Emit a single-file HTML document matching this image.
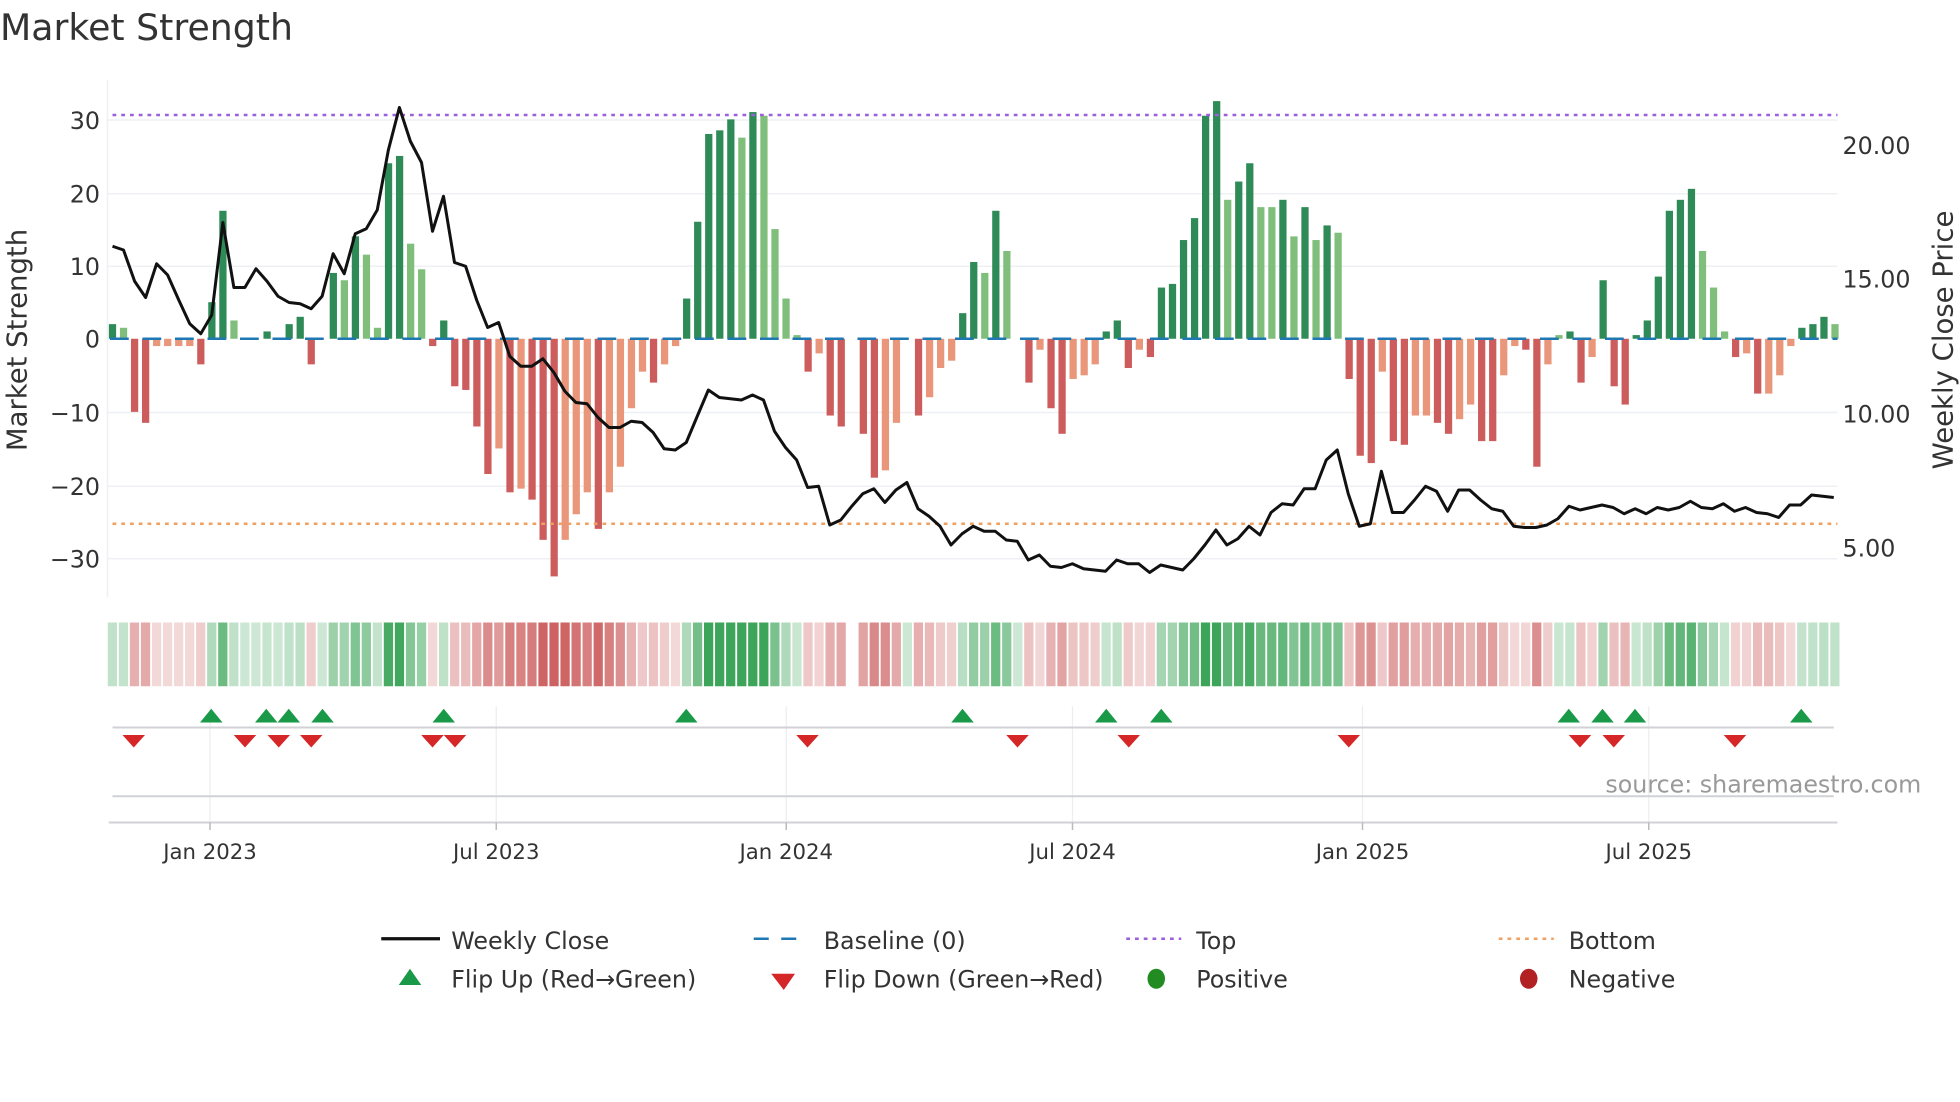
<!DOCTYPE html>
<html><head><meta charset="utf-8">
<style>
html,body{margin:0;padding:0;background:#fff;}
svg{display:block;font-family:"DejaVu Sans","Liberation Sans",sans-serif;}
</style></head>
<body>
<svg id="s" width="1960" height="1102" viewBox="0 0 1568 881.6" xmlns="http://www.w3.org/2000/svg">
<rect width="1568" height="882" fill="#fff"/>
<text x="0" y="32" font-size="29" fill="#333">Market Strength</text>
<g stroke="#eef0f4" stroke-width="1.2">
<line x1="86" x2="1470" y1="96" y2="96"/><line x1="86" x2="1470" y1="155" y2="155"/>
<line x1="86" x2="1470" y1="213" y2="213"/><line x1="86" x2="1470" y1="330" y2="330"/>
<line x1="86" x2="1470" y1="389" y2="389"/><line x1="86" x2="1470" y1="447" y2="447"/>
<line x1="86" x2="86" y1="64" y2="478"/>
</g>
<g font-size="19" fill="#333" text-anchor="end">
<text x="80" y="103">30</text><text x="80" y="162">20</text><text x="80" y="220">10</text>
<text x="80" y="278">0</text><text x="80" y="337">−10</text><text x="80" y="396">−20</text><text x="80" y="454">−30</text>
</g>
<g font-size="19" fill="#333">
<text x="1474" y="123">20.00</text><text x="1474" y="230">15.00</text><text x="1474" y="338">10.00</text><text x="1474" y="445">5.00</text>
</g>
<text transform="translate(21,272) rotate(-90)" font-size="22" fill="#333" text-anchor="middle">Market Strength</text>
<text transform="translate(1562,272) rotate(-90)" font-size="22" fill="#333" text-anchor="middle">Weekly Close Price</text>
<g id="bars"></g>
<line x1="88" x2="1470" y1="271" y2="271" stroke="#1f77b4" stroke-width="2" stroke-dasharray="15,11"/>
<line x1="90" x2="1470" y1="92" y2="92" stroke="#9b5fe0" stroke-width="2" stroke-dasharray="3,4"/>
<line x1="90" x2="1470" y1="419" y2="419" stroke="#f0a060" stroke-width="2" stroke-dasharray="3,4"/>
<polyline id="price" fill="none" stroke="#111" stroke-width="2.4" stroke-linejoin="round"/>
<g id="heat"></g>
<g stroke="#eceef2" stroke-width="1">
<line x1="168" x2="168" y1="565" y2="660"/><line x1="397" x2="397" y1="565" y2="660"/>
<line x1="629" x2="629" y1="565" y2="660"/><line x1="858" x2="858" y1="565" y2="660"/>
<line x1="1090" x2="1090" y1="565" y2="660"/><line x1="1319" x2="1319" y1="565" y2="660"/>
</g>
<line x1="90" x2="1467" y1="582" y2="582" stroke="#d0d2d6" stroke-width="1.6"/>
<line x1="90" x2="1467" y1="637" y2="637" stroke="#d0d2d6" stroke-width="1.6"/>
<line x1="87" x2="1470" y1="658" y2="658" stroke="#d0d2d6" stroke-width="1.6"/>
<g id="marks"></g>
<text x="1537" y="634" font-size="19" fill="#999" text-anchor="end">source: sharemaestro.com</text>
<g stroke="#bbb" stroke-width="1.2">
<line x1="168" x2="168" y1="658" y2="664"/><line x1="397" x2="397" y1="658" y2="664"/>
<line x1="629" x2="629" y1="658" y2="664"/><line x1="858" x2="858" y1="658" y2="664"/>
<line x1="1090" x2="1090" y1="658" y2="664"/><line x1="1319" x2="1319" y1="658" y2="664"/>
</g>
<g font-size="17" fill="#333" text-anchor="middle">
<text x="168" y="687">Jan 2023</text><text x="397" y="687">Jul 2023</text><text x="629" y="687">Jan 2024</text>
<text x="858" y="687">Jul 2024</text><text x="1090" y="687">Jan 2025</text><text x="1319" y="687">Jul 2025</text>
</g>
<g font-size="19" fill="#333">
<line x1="305" x2="352" y1="751" y2="751" stroke="#111" stroke-width="2.6"/>
<text x="361" y="759">Weekly Close</text>
<line x1="603" x2="647" y1="751" y2="751" stroke="#1f77b4" stroke-width="2" stroke-dasharray="12,10"/>
<text x="659" y="759">Baseline (0)</text>
<line x1="901" x2="945" y1="751" y2="751" stroke="#9b5fe0" stroke-width="2" stroke-dasharray="3,4"/>
<text x="957" y="759">Top</text>
<line x1="1199" x2="1243" y1="751" y2="751" stroke="#f0a060" stroke-width="2" stroke-dasharray="3,4"/>
<text x="1255" y="759">Bottom</text>
<polygon points="328,775 319,788 337,788" fill="#1a9a48"/>
<text x="361" y="790">Flip Up (Red→Green)</text>
<polygon points="617,779 636,779 627,792" fill="#d62728"/>
<text x="659" y="790">Flip Down (Green→Red)</text>
<ellipse cx="925" cy="783" rx="7" ry="8" fill="#228b22"/>
<text x="957" y="790">Positive</text>
<ellipse cx="1223" cy="783" rx="7" ry="8" fill="#b22222"/>
<text x="1255" y="790">Negative</text>
</g>
</svg>
<script>
var B="2D 1.5L -10R -11.5R -1O -1O -1O -1O -3.5R 5D 17.5D 2.5L 0L 0L 1D 0L 2D 3D -3.5R 0L 9D 8L 14D 11.5L 1.5L 24D 25D 13L 9.5L -1R 2.5D -6.5R -7R -12R -18.5R -15O -21R -20.5O -22R -27.5R -32.5R -27.5O -24O -21O -26R -21O -17.5O -9.5O -4.5O -6R -3.5O -1O 5.5D 16D 28D 28.5D 30D 27.5L 31D 30.5L 15L 5.5L 0.5L -4.5R -2O -10.5R -12R 0L -13R -19R -18O -11.5O 0L -10.5R -8O -4O -3O 3.5D 10.5D 9L 17.5D 12L 0L -6R -1.5O -9.5R -13R -5.5O -5O -3.5O 1D 2.5D -4R -1.5O -2.5R 7D 7.5D 13.5D 16.5D 30.5D 32.5D 19L 21.5D 24D 18L 18L 19D 14L 18D 13.5L 15.5D 14.5L -5.5R -16R -17R -4.5O -14R -14.5R -10.5O -10.5O -11.5R -13R -11O -9O -14R -14R -5O -1O -1.5R -17.5R -3.5O 0.5L 1D -6R -2.5O 8D -6.5R -9R 0.5D 2.5D 8.5D 17.5D 19D 20.5D 12L 7L 1L -2.5R -2O -7.5R -7.5O -5O -1O 1.5D 2D 3D 2L".split(" ");
var P=[197,200,225,238,211,220,240,259,267,252,178,230,230,215,225,237,242,243,247,237,203,219,187,183,168,120,86,113,130,185,157,210,213,240,262,258,285,293,293,287,298,313,322,323,334,342,342,337,338,346,359,360,354,333,312,318,319,320,316,320,345,358,368,390,389,420,416,405,395,391,402,392,386,407,413,421,436,427,421,425,425,432,433,448,444,453,454,451,455,456,457,448,451,451,458,452,454,456,447,436,424,436,431,421,428,410,403,404,391,391,368,360,395,421,419,377,410,410,400,389,393,409,392,392,400,407,409,421,422,422,420,415,405,408,406,404,406,411,407,411,406,408,406,401,406,407,403,409,406,410,411,414,404,404,396,397,398];
var C={D:"#2e8b57",L:"#7fbf7b",R:"#cd5c5c",O:"#e9967a"};
var n=B.length,x0=90,x1=1468,dx=(x1-x0)/(n-1),ns="http://www.w3.org/2000/svg";
function el(t,a,p){var e=document.createElementNS(ns,t);for(var k in a)e.setAttribute(k,a[k]);document.getElementById(p).appendChild(e);return e;}
for(var i=0;i<n;i++){var v=parseFloat(B[i]),c=B[i].slice(-1),x=x0+i*dx;
 if(v!=0){var h=Math.abs(v)*5.85;el("rect",{x:x-2.9,y:v>0?271-h:271,width:5.8,height:h,fill:C[c]},"bars");}
 var col;
 if(x>674&&x<688){col="#fff";}
 else if(v>=0){col="rgba(50,160,80,"+(0.25+Math.min(0.7,v/28*0.75))+")";}
 else{col="rgba(200,80,80,"+(0.2+Math.min(0.7,-v/30*0.75))+")";}
 el("rect",{x:x-3.8,y:498,width:7.4,height:51,fill:col},"heat");}
var pts=[];for(var i=0;i<P.length;i++){var x=x0+i*((1467-x0)/(P.length-1));pts.push(x.toFixed(1)+","+P[i]);}
document.getElementById("price").setAttribute("points",pts.join(" "));
var U=[169,213,231,258,355,549,770,885,929,1255,1282,1308,1441],D=[107,196,223,249,346,364,646,814,903,1079,1264,1291,1388];
U.forEach(function(x){el("polygon",{points:x+",567 "+(x-9)+",578 "+(x+9)+",578",fill:"#1a9a48"},"marks");});
D.forEach(function(x){el("polygon",{points:(x-9)+",588 "+(x+9)+",588 "+x+",598",fill:"#d62728"},"marks");});
</script>
</body></html>
